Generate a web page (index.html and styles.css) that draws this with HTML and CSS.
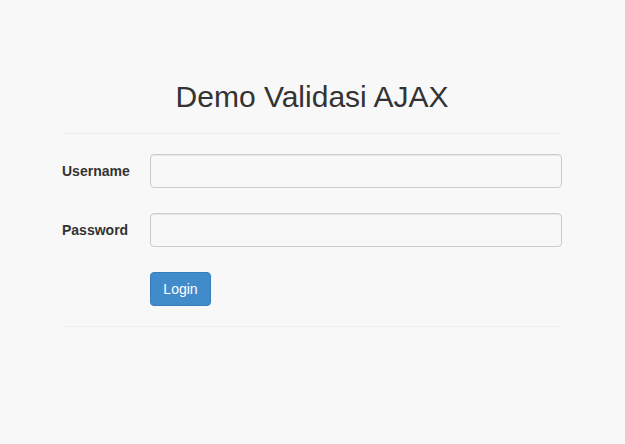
FILE: index.html
```html
<!DOCTYPE html>
<html>
<head>
<meta charset="utf-8">
<link rel="stylesheet" href="styles.css">
</head>
<body>
<div class="container">
  <h2 class="title">Demo Validasi AJAX</h2>
  <hr class="rule">
  <form class="form">
    <label class="label" for="u">Username</label>
    <input class="input" id="u" type="text">
    <label class="label" for="p">Password</label>
    <input class="input" id="p" type="password">
    <span></span>
    <div><button class="btn" type="button">Login</button></div>
  </form>
  <hr class="rule">
</div>
</body>
</html>
```
FILE: styles.css
```css
html, body {
  margin: 0;
  padding: 0;
  background: #f8f8f8;
  font-family: "Liberation Sans", Arial, sans-serif;
  font-size: 14px;
  color: #333;
}
body {
  padding-right: 1px;
}
.container {
  width: 500px;
  margin: 0 auto;
  padding-top: 80px;
}
.title {
  margin: 0;
  font-size: 30px;
  font-weight: normal;
  line-height: 33px;
  text-align: center;
  color: #333;
}
.rule {
  margin: 20px 0;
  border: 0;
  border-top: 1px solid #eee;
  height: 0;
}
.form {
  display: grid;
  grid-template-columns: 88px 412px;
  row-gap: 25px;
  align-items: center;
}
.label {
  font-weight: bold;
  font-size: 14px;
  color: #333;
}
.input {
  box-sizing: border-box;
  height: 34px;
  width: 412px;
  margin: 0;
  padding: 6px 12px;
  border: 1px solid #ccc;
  border-radius: 4px;
  background: #f8f8f8;
  box-shadow: inset 0 1px 1px rgba(0,0,0,0.075);
  font-family: inherit;
  font-size: 14px;
}
.btn {
  box-sizing: border-box;
  height: 34px;
  width: 61px;
  padding: 6px 0;
  border: 1px solid #357ebd;
  border-radius: 4px;
  background: #428bca;
  color: #fff;
  font-family: "Liberation Sans", Arial, sans-serif;
  font-size: 14px;
  line-height: 20px;
  text-align: center;
  cursor: pointer;
}
```
